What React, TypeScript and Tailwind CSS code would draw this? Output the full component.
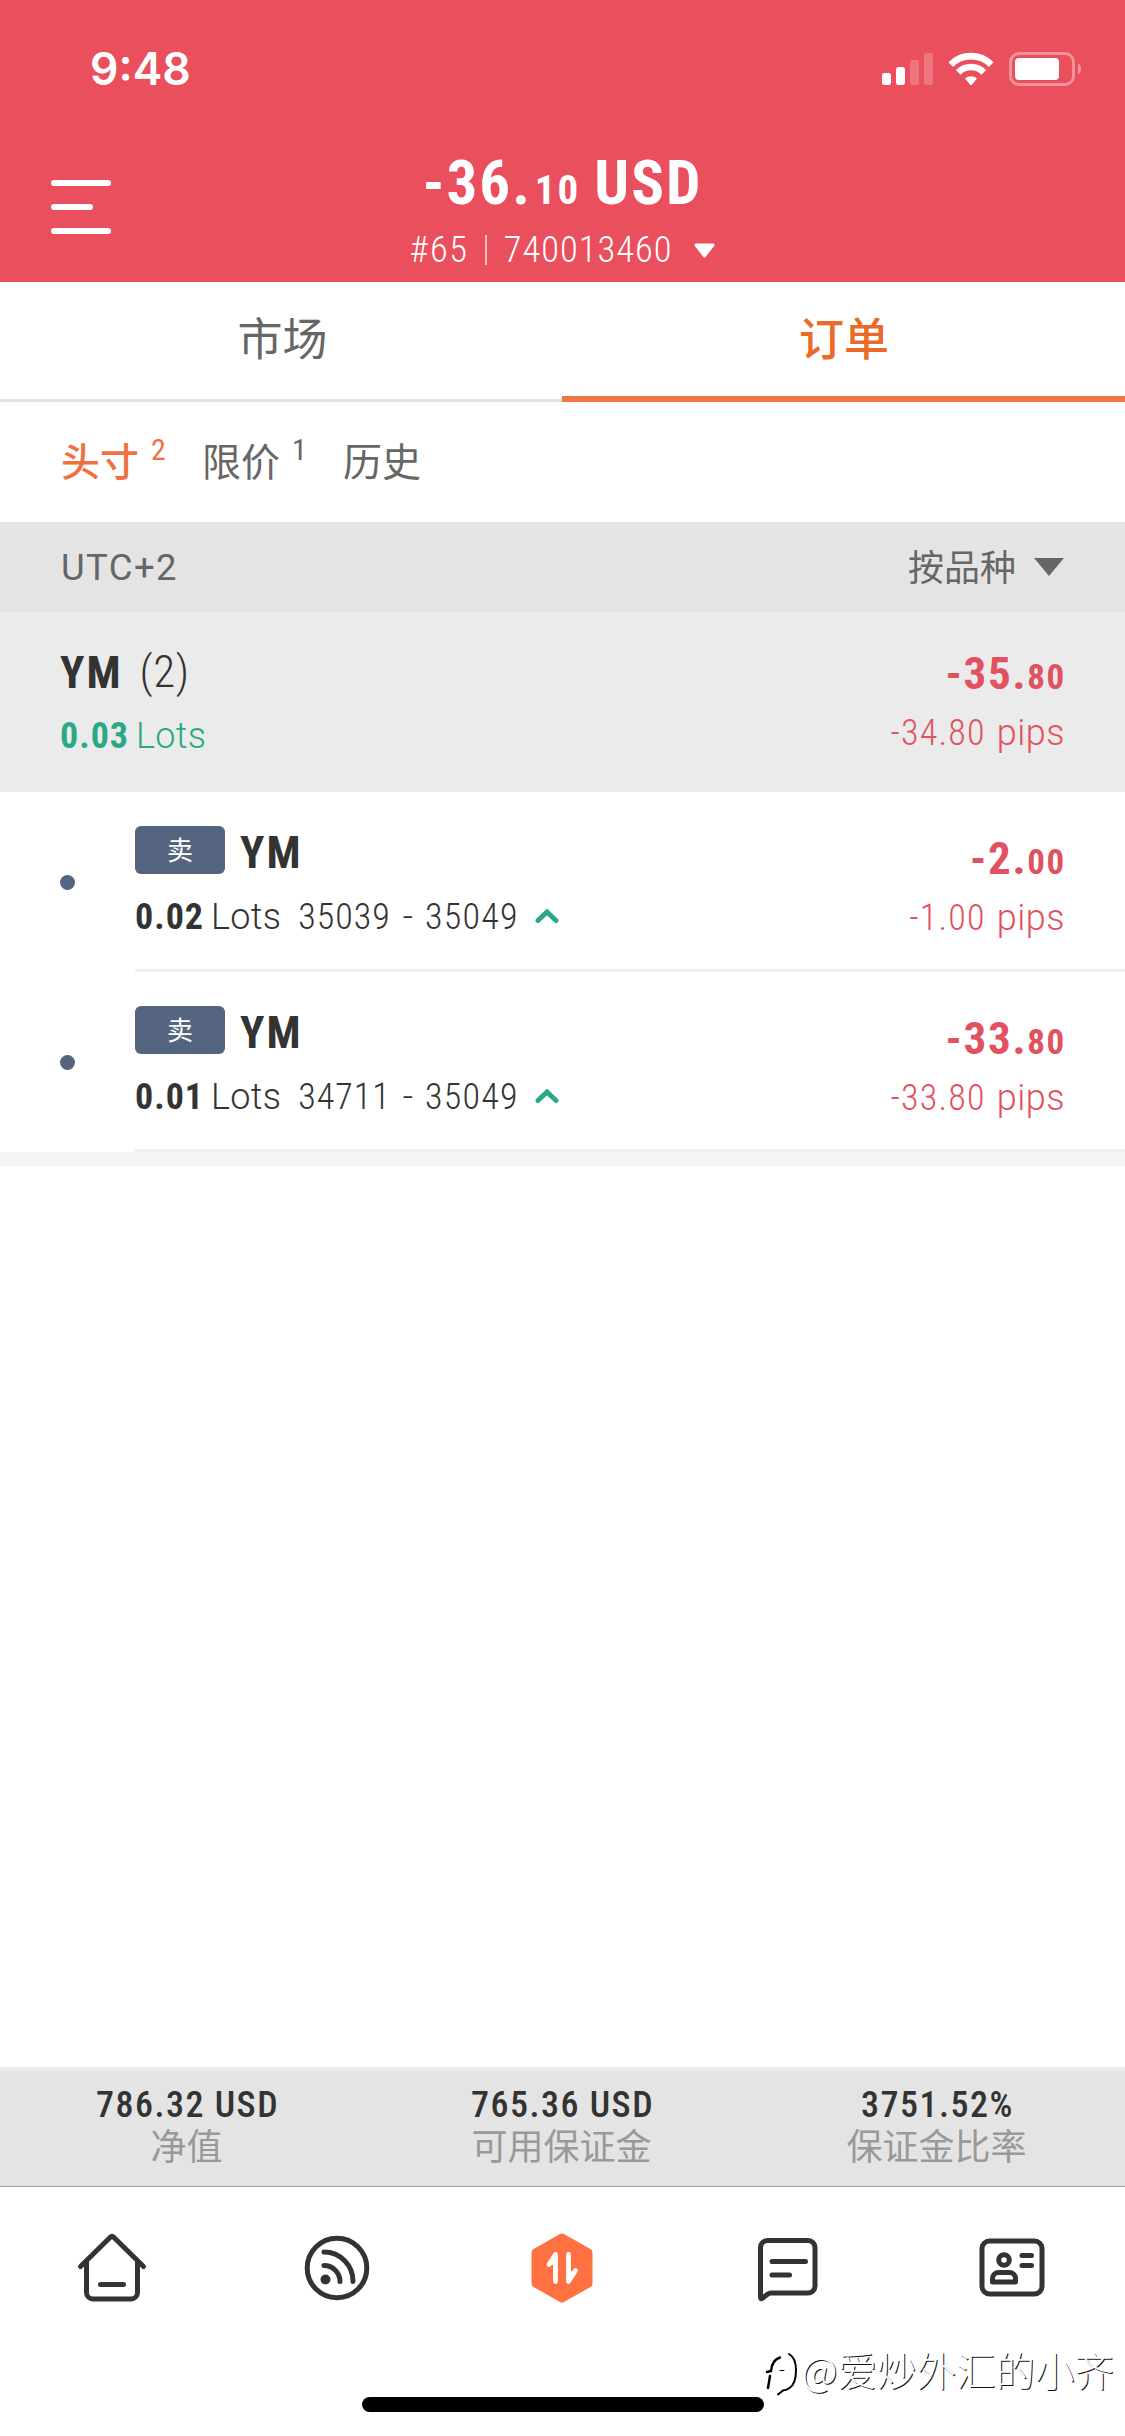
import type { ReactNode } from "react";

type Position = {
  id: number;
  side: string;
  symbol: string;
  lots: string;
  open: string;
  current: string;
  profit: string;
  pips: string;
};

const positions: Position[] = [
  { id: 1, side: "卖", symbol: "YM", lots: "0.02", open: "35039", current: "35049", profit: "-2.00", pips: "-1.00" },
  { id: 2, side: "卖", symbol: "YM", lots: "0.01", open: "34711", current: "35049", profit: "-33.80", pips: "-33.80" },
];

const summary = [
  { value: "786.32 USD", label: "净值" },
  { value: "765.36 USD", label: "可用保证金" },
  { value: "3751.52%", label: "保证金比率" },
];

function StatusBar() {
  return (
    <div className="flex h-[138px] items-center justify-between pr-[42px] pl-[90px] text-white">
      <span className="font-['Inter',sans-serif] text-[44.5px] leading-none font-semibold">9:48</span>
      <div className="flex items-center">
        <svg width="52" height="34" viewBox="0 0 52 34" fill="currentColor">
          <rect x="0" y="21" width="9" height="12" rx="2.5" />
          <rect x="14" y="15" width="9" height="18" rx="2.5" />
          <rect x="28" y="8" width="9" height="25" rx="2.5" opacity="0.22" />
          <rect x="42" y="1" width="9" height="32" rx="2.5" opacity="0.22" />
        </svg>
        <svg className="ml-[14px]" width="46" height="34" viewBox="0 0 46 34">
          <g fill="none" stroke="currentColor" strokeWidth="6.6">
            <path d="M2.8 12.6a28.4 28.4 0 0 1 40.4 0" />
            <path d="M10.2 20.4a18 18 0 0 1 25.6 0" />
          </g>
          <path d="M17 26.6a8.6 8.6 0 0 1 12 0l-5.1 6.2a1.2 1.2 0 0 1-1.8 0z" fill="currentColor" />
        </svg>
        <svg className="ml-[15px]" width="74" height="34" viewBox="0 0 74 34">
          <rect x="1.5" y="1.5" width="63" height="31" rx="8.5" fill="none" stroke="currentColor" strokeWidth="3" opacity="0.38" />
          <rect x="6" y="6" width="44" height="22" rx="4" fill="currentColor" />
          <path d="M69 11.5a6.5 6.5 0 0 1 0 11z" fill="currentColor" opacity="0.42" />
        </svg>
      </div>
    </div>
  );
}

function Header() {
  return (
    <header className="h-[282px] bg-[#ea4f5d] text-white">
      <StatusBar />
      <div className="grid h-[138px] grid-cols-[1fr_auto_1fr] items-center">
        <button className="ml-[51px] flex w-[60px] flex-col gap-[18px]" aria-label="menu">
          <span className="h-[6px] w-[60px] rounded-full bg-white" />
          <span className="h-[6px] w-[42px] rounded-full bg-white" />
          <span className="h-[6px] w-[60px] rounded-full bg-white" />
        </button>
        <div className="h-[138px] font-['Roboto',sans-serif] font-stretch-condensed">
          <div className="flex h-[90px] items-baseline justify-center text-[61px] leading-[91px] font-bold tracking-[2px]">
            <span>-36.</span>
            <span className="ml-[3px] text-[41px]">10</span>
            <span className="ml-[14px]">USD</span>
          </div>
          <div className="flex h-[44px] items-center justify-center text-[36.5px] font-[350] tracking-[0.8px]">
            <span className="tracking-[1.6px]">#65</span>
            <span className="mr-[17px] ml-[16px] h-[30px] w-[2px] bg-white/60" />
            <span className="tracking-[1px]">740013460</span>
            <svg className="ml-[22px]" width="21" height="15" viewBox="0 0 21 15">
              <path d="M2 .5h17a1.5 1.5 0 0 1 1.1 2.4l-8.5 11a1.5 1.5 0 0 1-2.3 0L.8 2.9A1.5 1.5 0 0 1 2 .5z" fill="currentColor" />
            </svg>
          </div>
        </div>
      </div>
    </header>
  );
}

function Tabs() {
  return (
    <div className="flex h-[120px] text-center text-[45px] leading-[109px]">
      <div className="w-[562px] border-b-[3px] border-[#e3e3e3] pl-[3px] text-[#666]">市场</div>
      <div className="flex-1 border-b-[6px] border-[#f07444] pl-[1px] font-medium text-[#ea6a28]">订单</div>
    </div>
  );
}

function SubTab({ label, count, className }: { label: string; count?: number; className: string }) {
  return (
    <div className={`flex ${className}`}>
      <span className="text-[39px] leading-[114px]">{label}</span>
      {count ? (
        <span className="ml-[12px] font-['Roboto',sans-serif] text-[30px] leading-[95px] font-normal font-stretch-condensed">
          {count}
        </span>
      ) : null}
    </div>
  );
}

function Loss({ value }: { value: string }) {
  const [whole, cents] = value.split(".");
  return (
    <div className="flex items-baseline justify-end text-[45px] leading-[61px] font-bold tracking-[1.7px]">
      <span>{whole}.</span>
      <span className="-mr-[2px] text-[35px]">{cents}</span>
    </div>
  );
}

function Pips({ value }: { value: string }) {
  return (
    <div className="-mr-[1px] flex items-baseline justify-end text-[36px] leading-[51px] font-[350]">
      <span className="tracking-[1.2px]">{value}</span>
      <span className="ml-[11px] tracking-[0.5px] font-stretch-[88%]">pips</span>
    </div>
  );
}

function Lots({ value, children }: { value: string; children?: ReactNode }) {
  return (
    <div className="flex items-center text-[36px] leading-[60px]">
      <span className="w-[76px] font-bold tracking-[1px]">{value}</span>
      <span className="font-[350] tracking-[0.3px] font-stretch-normal">Lots</span>
      {children}
    </div>
  );
}

function PositionRow({ position }: { position: Position }) {
  return (
    <div className="flex h-[180px] items-center pl-[60px]">
      <span className="size-[15px] rounded-full bg-[#56657f]" />
      <div className="ml-[60px] flex h-full flex-1 justify-between border-b-[3px] border-[#efefef] pr-[61px] font-['Roboto',sans-serif] font-stretch-condensed">
        <div className="pt-[29px] text-[#333]">
          <div className="flex h-[60px] items-center">
            <span className="mb-[2px] h-[48px] w-[90px] rounded-[6px] bg-[#56657f] text-center font-['Noto_Sans_CJK_SC',sans-serif] text-[26px] leading-[46px] font-normal font-stretch-normal text-white">
              {position.side}
            </span>
            <span className="mt-[2px] ml-[15px] text-[45px] leading-none font-bold tracking-[2px]">{position.symbol}</span>
          </div>
          <div className="mt-[6px]">
            <Lots value={position.lots}>
              <span className="ml-[17px] font-[350] tracking-[1px]">{position.open}</span>
              <span className="mx-[12px] font-[350] font-stretch-normal">-</span>
              <span className="font-[350] tracking-[1.2px]">{position.current}</span>
              <svg className="ml-[16px]" width="24" height="16" viewBox="0 0 24 16">
                <path d="M3 11.5L12 3l9 8.5" fill="none" stroke="#2aa98a" strokeWidth="5" strokeLinecap="round" />
              </svg>
            </Lots>
          </div>
        </div>
        <div className="pt-[36px] text-[#e2515f]">
          <Loss value={position.profit} />
          <Pips value={position.pips} />
        </div>
      </div>
    </div>
  );
}

function GroupHeader() {
  return (
    <div className="flex h-[180px] justify-between bg-[#ebebeb] pr-[61px] pl-[60px] font-['Roboto',sans-serif] font-stretch-condensed">
      <div className="pt-[30px] text-[#333]">
        <div className="flex h-[60px] items-center text-[45px] leading-none">
          <span className="font-bold tracking-[2px]">YM</span>
          <span className="mb-[1px] ml-[17px] font-[350] tracking-[0.6px]">(2)</span>
        </div>
        <div className="mt-[4px] text-[#2aa985]">
          <Lots value="0.03" />
        </div>
      </div>
      <div className="pt-[31px] text-[#e2515f]">
        <Loss value="-35.80" />
        <Pips value="-34.80" />
      </div>
    </div>
  );
}

function Summary() {
  return (
    <div className="grid h-[119px] grid-cols-3 border-t-[4px] border-[#ebebeb] bg-[#e4e4e4] pt-[14px] text-center">
      {summary.map((item) => (
        <div key={item.label}>
          <div className="font-['Roboto',sans-serif] text-[36px] leading-[40px] font-medium tracking-[1.5px] text-[#333] font-stretch-condensed">
            {item.value}
          </div>
          <div className="pr-[2px] text-[36px] leading-[38px] text-[#999]">{item.label}</div>
        </div>
      ))}
    </div>
  );
}

const line = {
  fill: "none",
  stroke: "#333",
  strokeWidth: 5,
  strokeLinecap: "round",
  strokeLinejoin: "round",
} as const;

function NavBar() {
  return (
    <nav className="grid h-[162px] grid-cols-5 place-items-center pr-[1px]">
      <svg width="72" height="72" viewBox="0 0 72 72" {...line}>
        <path d="M4.5 34.5 34.3 5.2a2.5 2.5 0 0 1 3.4 0L67.5 34.5" />
        <path d="M10.5 29v31.5A6.5 6.5 0 0 0 17 67h38a6.5 6.5 0 0 0 6.500-6.500V29" />
        <path d="M24.5 52.5h23" />
      </svg>
      <svg width="72" height="72" viewBox="0 0 72 72" {...line}>
        <circle cx="36" cy="36" r="29.8" />
        <circle cx="24.5" cy="47.5" r="5" fill="#333" stroke="none" />
        <path d="M23 33.5a16 16 0 0 1 16 16" />
        <path d="M23 20a29 29 0 0 1 29 29.5" />
      </svg>
      <svg width="72" height="72" viewBox="0 0 72 72">
        <path
          d="M36 5.5 62.5 20.5v31L36 66.5 9.5 51.5v-31z"
          fill="#ff7140"
          stroke="#ff7140"
          strokeWidth="8"
          strokeLinejoin="round"
        />
        <g fill="#fff" stroke="#fff" strokeWidth="4.8" strokeLinejoin="round" strokeLinecap="round">
          <path d="M29.5 49.5v-27l-6.5 10" fill="none" />
          <path d="M29.5 22.5v11l-5-1z" stroke="none" />
          <path d="M42.5 22.5v27l7-11" fill="none" />
          <path d="M42.5 49.5v-11l5 1z" stroke="none" />
        </g>
      </svg>
      <svg width="72" height="72" viewBox="0 0 72 72" {...line}>
        <path d="M9.5 64.5v-49a7 7 0 0 1 7-7H57a7 7 0 0 1 7 7V54a7 7 0 0 1-7 7H20q-2 0-3.5 1.200L11 66.500q-1.500 1-1.500-2z" />
        <path d="M21 29.5h33.5M21 43h17.5" />
      </svg>
      <svg width="72" height="72" viewBox="0 0 72 72" {...line}>
        <rect x="6" y="9" width="60" height="53" rx="7.5" />
        <circle cx="28" cy="28" r="5.3" />
        <path d="M16.5 50v-3.5a6 6 0 0 1 6-6h11a6 6 0 0 1 6 6V50z" />
        <path d="M46 23.5h9.5M46 33.5h9.5" />
      </svg>
    </nav>
  );
}

function Watermark() {
  return (
    <div className="absolute top-[2342px] right-[11px] flex items-center">
      <svg className="mt-[10px] mr-[2px]" width="36" height="44" viewBox="0 0 36 44" fill="none" stroke="#000" strokeLinecap="round">
        <path d="M3 20l4-1q1-11 9-13.5" strokeWidth="2.5" />
        <path d="M6 24L4 36" strokeWidth="2.5" />
        <path d="M16 18.5h4" strokeWidth="1" />
        <path d="M25 2q7 4 7 16 0 14-6.5 18Q23 38 19 38.5l-5 4" strokeWidth="2" />
      </svg>
      <span className="text-[39.5px] leading-[52px] font-light whitespace-nowrap text-white [text-shadow:1px_1px_0_#111]">
        @爱炒外汇的小齐
      </span>
    </div>
  );
}

export default function App() {
  return (
    <div className="relative flex h-[2436px] w-[1125px] flex-col overflow-hidden bg-white font-['Noto_Sans_CJK_SC',sans-serif]">
      <Header />
      <Tabs />
      <div className="flex h-[120px] pl-[61px] text-[#666]">
        <SubTab label="头寸" count={2} className="w-[141px] font-medium text-[#f07040]" />
        <SubTab label="限价" count={1} className="w-[141px]" />
        <SubTab label="历史" className="" />
      </div>
      <div className="flex h-[90px] items-center justify-between bg-[#e4e4e4] px-[61px] text-[#666]">
        <span className="mt-[2px] font-['Roboto',sans-serif] text-[36.5px] tracking-[1.4px]">UTC+2</span>
        <span className="flex items-center text-[36px] leading-[86px]">
          <span className="mb-[4px]">按品种</span>
          <svg className="ml-[18px]" width="30" height="18" viewBox="0 0 30 18">
            <path d="M0 0h30L15 18z" fill="currentColor" />
          </svg>
        </span>
      </div>
      <GroupHeader />
      {positions.map((position) => (
        <PositionRow key={position.id} position={position} />
      ))}
      <div className="h-[14px] bg-[#f4f4f4]" />
      <main className="flex-1" />
      <Summary />
      <div className="h-px bg-[#999]" />
      <NavBar />
      <div className="flex h-[87px] justify-center pt-[48px]">
        <div className="h-[15px] w-[402px] rounded-full bg-black" />
      </div>
      <Watermark />
    </div>
  );
}
